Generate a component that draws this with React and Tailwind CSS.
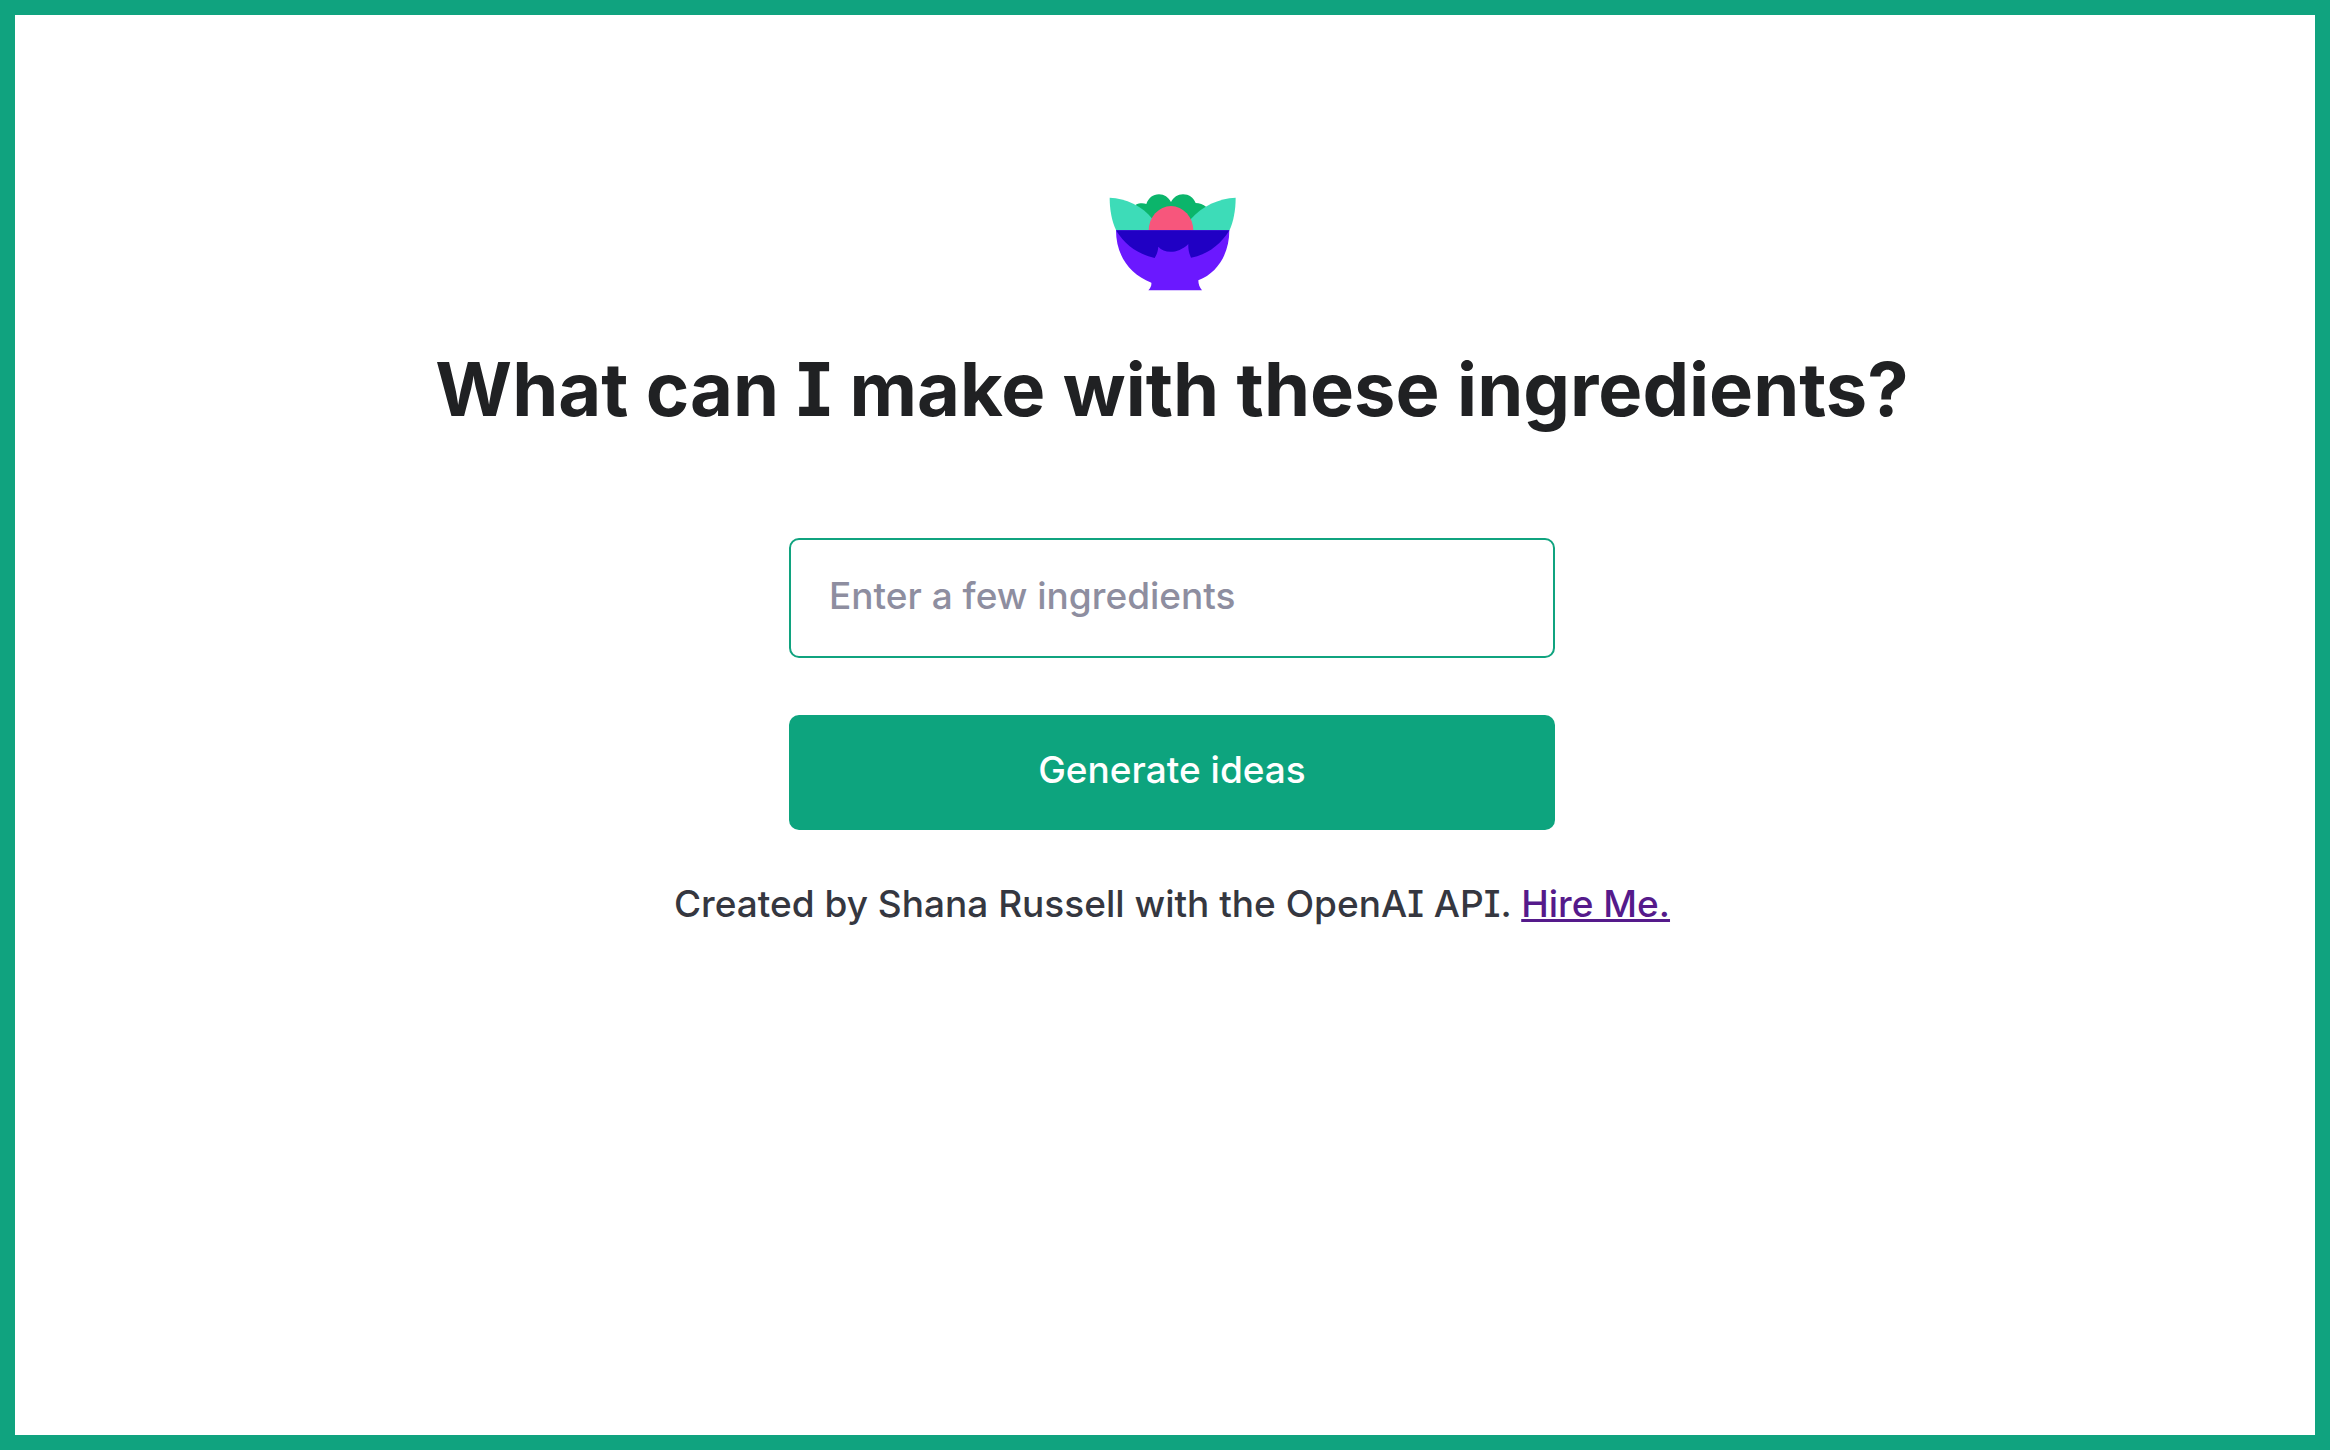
import { useState } from "react";

function SaladIcon() {
  return (
    <svg viewBox="54 40 381 291" className="h-[97px] w-[127px]" role="img" aria-label="Salad bowl">
      <path d="M134 72C145 67 157 67 166 70C172 52 186 41 204 41C220 41 232 50 240 64C248 50 260 41 276 41C294 41 307 51 314 67C325 67 337 71 346 79L300 150H180Z" fill="#0bb56b" />
      <path d="M56 51C104 53 154 75 185 116L180 150H76C62 121 56 86 56 51Z" fill="#3ddcb8" />
      <path d="M434 51C384 53 332 76 299 116L304 150H415C428 121 434 86 434 51Z" fill="#3ddcb8" />
      <path d="M173 150A67 74 0 0 1 307 150Z" fill="#f7567c" />
      <path d="M75 149H415C415 218 381 276 322 299C322 311 326 321 333 329H172C179 321 182 314 181 306C112 279 75 220 75 149Z" fill="#6b18ff" />
      <path d="M75 149H415C388 194 348 222 300 231C294 218 291 204 292 190C262 220 220 220 202 198C201 211 197 222 191 232C142 221 102 194 75 149Z" fill="#2000c4" />
    </svg>
  );
}

export default function App() {
  const [ingredients, setIngredients] = useState("");

  return (
    <div className="flex min-h-screen flex-col border-[15px] border-[#10a37f] bg-white font-[Inter,sans-serif] font-medium [font-feature-settings:'cv08']">
      <main className="flex flex-col items-center pt-[179px] pl-3.5">
        <SaladIcon />
        <h1 className="mt-[54px] text-center text-[74px] leading-[88px] font-bold text-[#202123]">
          What can I make with these ingredients?
        </h1>
        <form className="mt-[105px] flex w-[766px] max-w-full flex-col gap-[57px]" onSubmit={(e) => e.preventDefault()}>
          <input
            type="text"
            name="ingredients"
            aria-label="Ingredients"
            placeholder="Enter a few ingredients"
            value={ingredients}
            onChange={(e) => setIngredients(e.target.value)}
            className="h-[120px] rounded-[10px] border-2 border-[#10a37f] px-[38px] pb-1.5 text-[37px] text-[#353740] outline-none placeholder:text-[#8e8ea0]"
          />
          <button type="submit" className="h-[115px] rounded-[10px] bg-[#0da47e] pb-1.5 text-center text-[37px] text-white">
            Generate ideas
          </button>
        </form>
        <p className="mt-[50px] text-[37px] leading-[48px] text-[#353740]">
          Created by Shana Russell with the OpenAI API.{" "}
          <a href="#hire" className="text-[#551a8b] underline">Hire Me.</a>
        </p>
      </main>
    </div>
  );
}
